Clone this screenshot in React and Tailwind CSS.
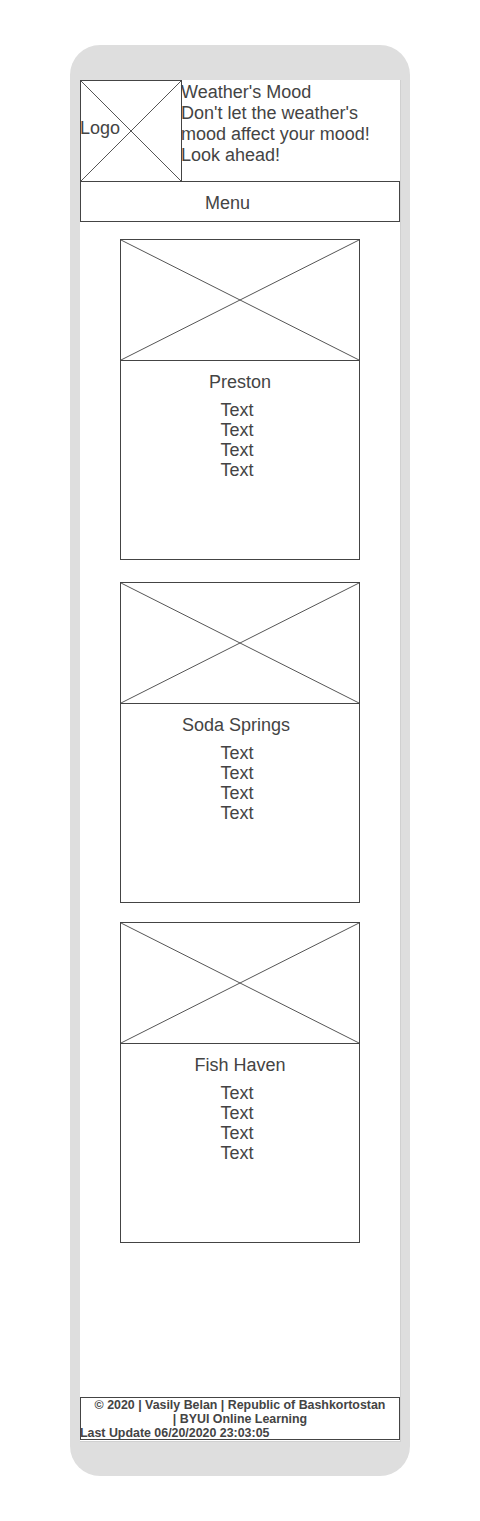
import React from "react";

function XBox({ className = "" }) {
  return (
    <svg className={className} viewBox="0 0 100 100" preserveAspectRatio="none">
      <line x1="0" y1="0" x2="100" y2="100" stroke="#555" strokeWidth="1" vectorEffect="non-scaling-stroke" />
      <line x1="100" y1="0" x2="0" y2="100" stroke="#555" strokeWidth="1" vectorEffect="non-scaling-stroke" />
    </svg>
  );
}

function Card({ title, mt, shift = "" }) {
  return (
    <div className={`mx-auto w-[240px] h-[321px] border border-[#444] flex flex-col ${mt}`}>
      <div className="h-[121px] border-b border-[#444] relative">
        <XBox className="absolute inset-0 w-full h-full" />
      </div>
      <div className="flex flex-col items-center pt-[9px]">
        <div className={`text-[18px] leading-[24px] ${shift}`}>{title}</div>
        <div className="mt-[6px] flex flex-col items-center text-[18px] leading-[20px] pr-[6px]">
          <span>Text</span>
          <span>Text</span>
          <span>Text</span>
          <span>Text</span>
        </div>
      </div>
    </div>
  );
}

export default function App() {
  return (
    <div className="w-[480px] h-[1521px] bg-white pt-[45px] text-[#444]" style={{ fontFamily: '"Liberation Sans", Arial, sans-serif' }}>
      <div className="ml-[70px] w-[340px] h-[1431px] bg-[#dedede] rounded-[30px] pt-[35px] pl-[10px] pr-[9px] pb-[34px]">
        <div className="h-full bg-white border-r border-b border-[#d0d0d0] flex flex-col">
          <div className="flex h-[102px]">
            <div className="w-[102px] h-[102px] border border-[#444] relative flex items-center">
              <XBox className="absolute inset-0 w-full h-full" />
              <span className="relative text-[18px] leading-[21px] -ml-[1px] -mt-[6px]">Logo</span>
            </div>
            <div className="text-[18px] leading-[21px] -ml-[1px] pt-[2px]">
              Weather's Mood<br />
              Don't let the weather's<br />
              mood affect your mood!<br />
              Look ahead!
            </div>
          </div>
          <div className="w-[320px] h-[41px] -mt-[1px] border border-[#444] flex items-center pl-[124px] pt-[3px] text-[18px]">
            Menu
          </div>
          <Card title="Preston" mt="mt-[17px]" />
          <Card title="Soda Springs" mt="mt-[22px]" shift="-ml-[8px]" />
          <Card title="Fish Haven" mt="mt-[19px]" />
          <div className="mt-auto mb-[1px] w-[320px] h-[43px] border border-[#444] text-[12.4px] leading-[14px] font-bold">
            <div className="text-center">© 2020 | Vasily Belan | Republic of Bashkortostan<br />| BYUI Online Learning</div>
            <div className="-ml-[1px]">Last Update 06/20/2020 23:03:05</div>
          </div>
        </div>
      </div>
    </div>
  );
}
